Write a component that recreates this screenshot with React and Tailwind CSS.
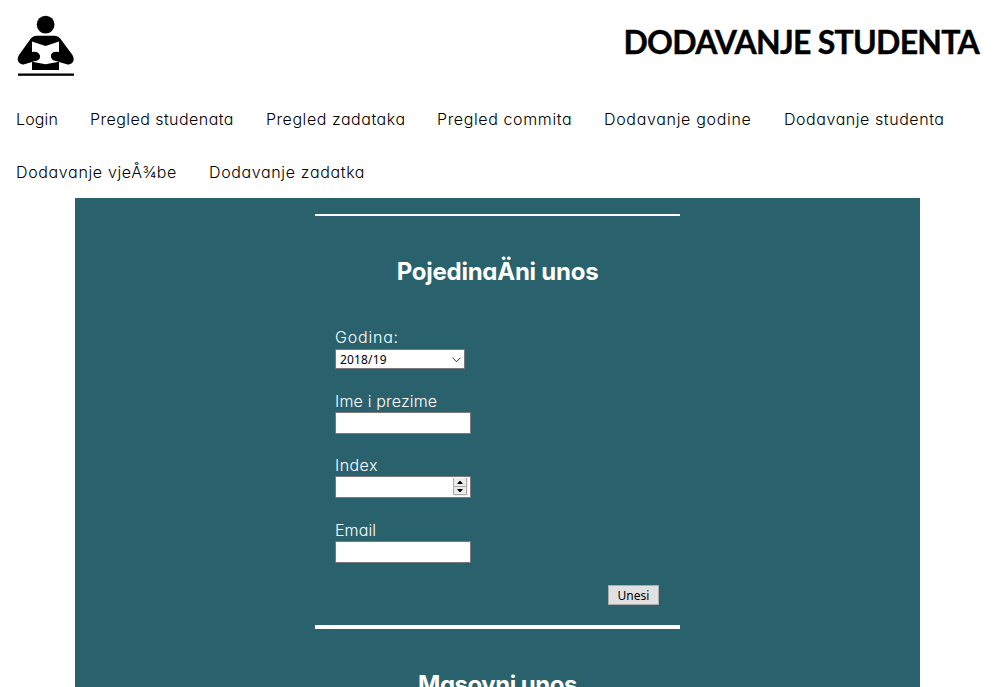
const GOTHIC =
  "font-['Century_Gothic','Inter',sans-serif] [font-feature-settings:'cv11','calt'_0]";

const LINKS = [
  { label: 'Login', size: 'w-[42px] tracking-[0.15px]' },
  { label: 'Pregled studenata', size: 'w-[144px] tracking-[0.45px]' },
  { label: 'Pregled zadataka', size: 'w-[139px] tracking-[0.54px]' },
  { label: 'Pregled commita', size: 'w-[135px] tracking-[0.62px]' },
  { label: 'Dodavanje godine', size: 'w-[148px] tracking-[0.68px]' },
  { label: 'Dodavanje studenta', size: 'w-[161px] tracking-[0.56px]' },
  { label: 'Dodavanje vjeÅ¾be', size: 'w-[161px] tracking-[0.65px]' },
  { label: 'Dodavanje zadatka', size: 'w-[156px] tracking-[0.64px]' },
];

function Logo() {
  return (
    <svg width="58" height="62" viewBox="17 15 58 62" className="mt-[15px] ml-[17px] block">
      <circle cx="45.6" cy="24.6" r="8.9" />
      <path d="M36 35.7H55Q58 35.7 60 38.2L72.3 54.8Q75 59.5 72.5 62.5Q70.4 65 66.8 64.2L59 62V70H32V62L24.4 64.2Q20.6 65 18.7 62.3Q16.5 59 19 55L31 38.2Q33 35.7 36 35.7Z" />
      <path
        fill="#fff"
        d="M32 41.5L45.5 46L59 41.5V52Q53 51 51.3 54Q50 57.5 53 60.3L59 61.8L45.5 64.3L32 61.8L37.5 60.5Q40.8 58.5 39.9 55.2Q38 51 32 52Z"
      />
      <rect x="18" y="73.5" width="56" height="2.3" />
    </svg>
  );
}

function Field({ label, spacing, children }) {
  return (
    <div className="flex flex-col items-start">
      <label className={`h-5 text-[16px] leading-5 font-light ${spacing}`}>{label}</label>
      {children}
    </div>
  );
}

const BOX = 'w-[136px] h-[22px] mt-px border border-[#7a7a7a] bg-white';

export default function App() {
  return (
    <div className={`h-[687px] overflow-hidden bg-white text-black ${GOTHIC}`}>
      <header className="flex h-[93px] justify-between">
        <Logo />
        <h1 className="mt-[22px] mr-4 font-['Century_Gothic','Lato',sans-serif] text-[32px] leading-10 font-bold tracking-[-0.72px] whitespace-nowrap [-webkit-text-stroke:0.4px_black]">
          DODAVANJE STUDENTA
        </h1>
      </header>
      <nav className="flex h-[105px] flex-wrap content-start gap-x-8 pl-4">
        {LINKS.map((l) => (
          <a key={l.label} className={`${l.size} block h-[53px] text-[16px] leading-[52px] font-light whitespace-nowrap`}>
            {l.label}
          </a>
        ))}
      </nav>
      <main className="mx-auto h-[489px] w-[845px] overflow-hidden bg-[#29626d] pt-4 text-white">
        <section className="mx-auto h-[415px] w-[365px] border-t-2 border-b-4 border-white px-5">
          <h2 className="mt-[41px] text-center text-[24px] leading-[30px] font-bold tracking-[-0.25px]">
            PojedinaÄni unos
          </h2>
          <form className="mt-[40px] flex flex-col">
            <Field label="Godina:" spacing="tracking-[0.8px]">
              <div className="mt-[2px] flex h-5 w-[130px] items-center justify-between border border-[#7a7a7a] bg-white pr-[3px] pl-1 font-['Tahoma','Noto_Sans',sans-serif] text-[12px] tracking-[0.15px] text-black">
                <span className="pt-px">2018/19</span>
                <svg width="9" height="6" viewBox="0 0 9 6" fill="none" stroke="#333" className="mt-px">
                  <path d="M.5 .7L4.5 4.7L8.5 .7" />
                </svg>
              </div>
            </Field>
            <div className="h-[22px]" />
            <Field label="Ime i prezime" spacing="tracking-[0.18px]">
              <div className={BOX} />
            </Field>
            <div className="h-[21px]" />
            <Field label="Index" spacing="tracking-[0.45px]">
              <div className={`${BOX} flex justify-end pt-px pr-[2px]`}>
                <svg width="15" height="18" viewBox="0 0 15 18">
                  <rect width="15" height="18" fill="#ececec" />
                  <path d="M.5 0V8.5H13.5V0M.5 9V16.5H13.5V9" fill="none" stroke="#aaa" />
                  <path d="M4 6L6.5 3H7.5L10 6ZM4 11H10L7.5 14H6.5Z" />
                </svg>
              </div>
            </Field>
            <div className="h-[22px]" />
            <Field label="Email" spacing="tracking-[0.1px]">
              <div className={BOX} />
            </Field>
            <button
              type="button"
              className="mt-[22px] mr-px h-5 w-[51px] self-end border border-[#adadad] bg-[#e1e1e1] font-['Tahoma','Noto_Sans',sans-serif] text-[12px] leading-[20px] text-black"
            >
              Unesi
            </button>
          </form>
        </section>
        <h2 className="mt-[41px] text-center text-[24px] leading-[30px] font-bold tracking-[-0.5px]">Masovni unos</h2>
      </main>
    </div>
  );
}
